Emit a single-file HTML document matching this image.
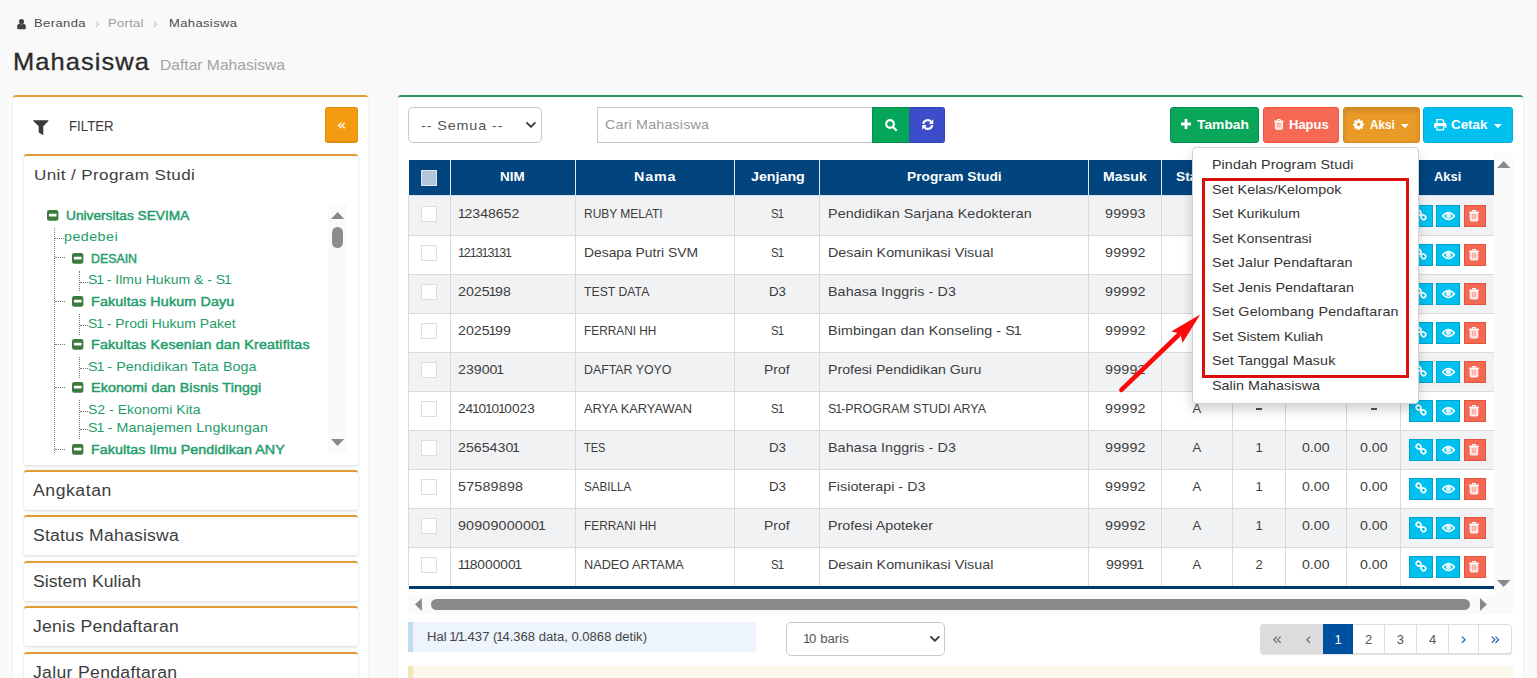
<!DOCTYPE html>
<html><head><meta charset="utf-8"><title>Mahasiswa</title>
<style>
html,body{margin:0;padding:0}
body{width:1537px;height:678px;overflow:hidden;background:#f9f9f9;position:relative;font-family:"Liberation Sans", sans-serif;}
.a{position:absolute;box-sizing:border-box}
.t{position:absolute;white-space:pre;line-height:1;font-family:"Liberation Sans", sans-serif;transform-origin:0 50%}
svg{position:absolute;overflow:visible}
.t i,.m i{font-style:normal;margin:0 -0.085em}
</style></head>
<body>
<svg style="left:17.4px;top:18.6px;" width="9" height="10.3" viewBox="0 0 9 10.3"><circle cx="4.5" cy="2.6" r="2.55" fill="#444"/><path d="M0.2 9.2 L0.2 7.4 Q0.2 4.8 2.7 4.7 Q4.5 6 6.3 4.7 Q8.8 4.8 8.8 7.4 L8.8 9.2 Q8.8 10.3 7.6 10.3 H1.4 Q0.2 10.3 0.2 9.2 Z" fill="#444"/></svg>
<span class="t" style="left:34.20px;top:17.91px;font-size:11.8px;color:#4a4a4a;font-weight:400;letter-spacing:0.368px;transform:scaleX(1.1000);">Beranda</span>
<svg style="left:95px;top:20.6px;" width="4.4" height="6.4" viewBox="0 0 5 8"><path transform="translate(5,0) scale(-1,1)" d="M4.2 0.6 L0.8 4 L4.2 7.4" fill="none" stroke="#c2c2c8" stroke-width="1.4"/></svg>
<span class="t" style="left:108.00px;top:17.91px;font-size:11.8px;color:#9c9c9c;font-weight:400;letter-spacing:0.289px;transform:scaleX(1.1000);">Portal</span>
<svg style="left:153px;top:20.6px;" width="4.4" height="6.4" viewBox="0 0 5 8"><path transform="translate(5,0) scale(-1,1)" d="M4.2 0.6 L0.8 4 L4.2 7.4" fill="none" stroke="#c2c2c8" stroke-width="1.4"/></svg>
<span class="t" style="left:169.00px;top:17.91px;font-size:11.8px;color:#4a4a4a;font-weight:400;letter-spacing:0.350px;transform:scaleX(1.1000);">Mahasiswa</span>
<span class="t" style="left:13.00px;top:50.96px;font-size:23.2px;color:#2b2b2b;font-weight:400;letter-spacing:0.956px;transform:scaleX(1.1000);-webkit-text-stroke:0.3px #2b2b2b;">Mahasiswa</span>
<span class="t" style="left:160.00px;top:57.30px;font-size:15px;color:#a3a3a3;font-weight:400;transform:scaleX(1.0413);">Daftar Mahasiswa</span>
<div class="a" style="left:13px;top:95px;width:355px;height:600px;background:#fff;border-top:2px solid #de9d35;border-radius:3px;box-shadow:0 1px 2px rgba(0,0,0,.12);"></div>
<svg style="left:32.5px;top:119.7px;" width="16" height="16" viewBox="0 0 16 16"><path d="M0.4 0.3 H15.2 Q15.9 0.5 15.4 1.1 L10.3 6.3 V15.3 L5.7 12.6 V6.3 L0.3 1.1 Q-0.2 0.5 0.4 0.3 Z" fill="#3a3a3a"/></svg>
<span class="t" style="left:68.50px;top:117.88px;font-size:15.5px;color:#3a3a3a;font-weight:400;transform:scaleX(0.8555);">FILTER</span>
<div class="a" style="left:325px;top:107px;width:33px;height:36px;background:#f39c12;border-radius:3px;border:1px solid #e08e0b;border-bottom-width:2px;"></div>
<svg style="left:337.9px;top:121.8px;" width="7.4" height="6.9" viewBox="0 0 9 8"><path  d="M4.2 0.6 L0.8 4 L4.2 7.4 M8.2 0.6 L4.8 4 L8.2 7.4" fill="none" stroke="#fff" stroke-width="1.5"/></svg>
<div class="a" style="left:23.5px;top:154px;width:334px;height:310.5px;background:#fff;border-top:2px solid #de9d35;border-radius:3px;box-shadow:0 1px 3px rgba(0,0,0,.16);"></div>
<span class="t" style="left:33.50px;top:167.08px;font-size:15.5px;color:#3d3d3d;font-weight:400;letter-spacing:0.348px;transform:scaleX(1.1000);">Unit / Program Studi</span>
<div class="a" style="left:328px;top:204px;width:19px;height:249px;background:#fafafa;"></div>
<svg style="left:330.9px;top:211.8px;" width="13.2" height="7.1" viewBox="0 0 13.2 7.1"><path d="M0 7.1 L6.6 0 L13.2 7.1 Z" fill="#8a8a8a"/></svg>
<div class="a" style="left:332px;top:227px;width:11px;height:21px;background:#8c8c8c;border-radius:5.5px;"></div>
<svg style="left:330.9px;top:438.6px;" width="13.2" height="7.1" viewBox="0 0 13.2 7.1"><path d="M0 0 L6.6 7.1 L13.2 0 Z" fill="#8a8a8a"/></svg>
<div class="a" style="left:54px;top:228px;width:0;height:225px;border-left:1px dotted #777"></div>
<div class="a" style="left:79px;top:270.5px;width:0;height:20.5px;border-left:1px dotted #777"></div>
<div class="a" style="left:79px;top:314px;width:0;height:20.5px;border-left:1px dotted #777"></div>
<div class="a" style="left:79px;top:357px;width:0;height:20.5px;border-left:1px dotted #777"></div>
<div class="a" style="left:79px;top:400px;width:0;height:39px;border-left:1px dotted #777"></div>
<div class="a" style="left:54.5px;top:238px;width:9.5px;height:0;border-top:1px dotted #777"></div>
<div class="a" style="left:54.5px;top:257px;width:10.0px;height:0;border-top:1px dotted #777"></div>
<div class="a" style="left:54.5px;top:300.5px;width:10.0px;height:0;border-top:1px dotted #777"></div>
<div class="a" style="left:54.5px;top:343.5px;width:10.0px;height:0;border-top:1px dotted #777"></div>
<div class="a" style="left:54.5px;top:386.5px;width:10.0px;height:0;border-top:1px dotted #777"></div>
<div class="a" style="left:54.5px;top:448.5px;width:10.0px;height:0;border-top:1px dotted #777"></div>
<div class="a" style="left:79.5px;top:281.5px;width:8.5px;height:0;border-top:1px dotted #777"></div>
<div class="a" style="left:79.5px;top:325px;width:8.5px;height:0;border-top:1px dotted #777"></div>
<div class="a" style="left:79.5px;top:368px;width:8.5px;height:0;border-top:1px dotted #777"></div>
<div class="a" style="left:79.5px;top:411px;width:8.5px;height:0;border-top:1px dotted #777"></div>
<div class="a" style="left:79.5px;top:429px;width:8.5px;height:0;border-top:1px dotted #777"></div>
<svg style="left:46.6px;top:210px;" width="11.4" height="10.7" viewBox="0 0 11.4 10.7"><rect x="0" y="0" width="11.4" height="10.7" rx="2.3" fill="#3d7a3d"/><rect x="2" y="3.8" width="7.5" height="2.6" rx="0.5" fill="#fff"/></svg>
<span class="t" style="left:65.90px;top:209.00px;font-size:13px;color:#1f9d6b;font-weight:400;transform:scaleX(1.0534);-webkit-text-stroke:0.45px #1f9d6b;">Universitas SEVIMA</span>
<span class="t" style="left:63.90px;top:229.70px;font-size:13px;color:#1f9d6b;font-weight:400;letter-spacing:0.408px;transform:scaleX(1.1000);">pedebei</span>
<svg style="left:71.6px;top:253.2px;" width="11.4" height="10.7" viewBox="0 0 11.4 10.7"><rect x="0" y="0" width="11.4" height="10.7" rx="2.3" fill="#3d7a3d"/><rect x="2" y="3.8" width="7.5" height="2.6" rx="0.5" fill="#fff"/></svg>
<span class="t" style="left:90.70px;top:252.00px;font-size:13px;color:#1f9d6b;font-weight:400;transform:scaleX(0.9503);-webkit-text-stroke:0.45px #1f9d6b;">DESAIN</span>
<svg style="left:71.6px;top:296.09999999999997px;" width="11.4" height="10.7" viewBox="0 0 11.4 10.7"><rect x="0" y="0" width="11.4" height="10.7" rx="2.3" fill="#3d7a3d"/><rect x="2" y="3.8" width="7.5" height="2.6" rx="0.5" fill="#fff"/></svg>
<span class="t" style="left:90.70px;top:294.90px;font-size:13px;color:#1f9d6b;font-weight:400;letter-spacing:0.132px;transform:scaleX(1.1000);-webkit-text-stroke:0.45px #1f9d6b;">Fakultas Hukum Dayu</span>
<svg style="left:71.6px;top:339.2px;" width="11.4" height="10.7" viewBox="0 0 11.4 10.7"><rect x="0" y="0" width="11.4" height="10.7" rx="2.3" fill="#3d7a3d"/><rect x="2" y="3.8" width="7.5" height="2.6" rx="0.5" fill="#fff"/></svg>
<span class="t" style="left:90.70px;top:338.00px;font-size:13px;color:#1f9d6b;font-weight:400;letter-spacing:0.158px;transform:scaleX(1.1000);-webkit-text-stroke:0.45px #1f9d6b;">Fakultas Kesenian dan Kreatifitas</span>
<svg style="left:71.6px;top:381.7px;" width="11.4" height="10.7" viewBox="0 0 11.4 10.7"><rect x="0" y="0" width="11.4" height="10.7" rx="2.3" fill="#3d7a3d"/><rect x="2" y="3.8" width="7.5" height="2.6" rx="0.5" fill="#fff"/></svg>
<span class="t" style="left:90.70px;top:380.50px;font-size:13px;color:#1f9d6b;font-weight:400;letter-spacing:0.097px;transform:scaleX(1.1000);-webkit-text-stroke:0.45px #1f9d6b;">Ekonomi dan Bisnis Tinggi</span>
<svg style="left:71.6px;top:444.09999999999997px;" width="11.4" height="10.7" viewBox="0 0 11.4 10.7"><rect x="0" y="0" width="11.4" height="10.7" rx="2.3" fill="#3d7a3d"/><rect x="2" y="3.8" width="7.5" height="2.6" rx="0.5" fill="#fff"/></svg>
<span class="t" style="left:90.70px;top:442.90px;font-size:13px;color:#1f9d6b;font-weight:400;letter-spacing:0.048px;transform:scaleX(1.1000);-webkit-text-stroke:0.45px #1f9d6b;">Fakultas Ilmu Pendidikan ANY</span>
<span class="t" style="left:88.20px;top:273.00px;font-size:13px;color:#1f9d6b;font-weight:400;transform:scaleX(1.0795);">S<i>1</i> - Ilmu Hukum &amp; - S<i>1</i></span>
<span class="t" style="left:88.20px;top:317.00px;font-size:13px;color:#1f9d6b;font-weight:400;transform:scaleX(1.0753);">S<i>1</i> - Prodi Hukum Paket</span>
<span class="t" style="left:88.20px;top:359.70px;font-size:13px;color:#1f9d6b;font-weight:400;letter-spacing:0.069px;transform:scaleX(1.1000);">S<i>1</i> - Pendidikan Tata Boga</span>
<span class="t" style="left:88.20px;top:402.80px;font-size:13px;color:#1f9d6b;font-weight:400;transform:scaleX(1.0812);">S2 - Ekonomi Kita</span>
<span class="t" style="left:88.20px;top:420.80px;font-size:13px;color:#1f9d6b;font-weight:400;letter-spacing:0.108px;transform:scaleX(1.1000);">S<i>1</i> - Manajemen Lngkungan</span>
<div class="a" style="left:24px;top:455.5px;width:333px;height:8px;background:#fff;"></div>
<div class="a" style="left:23.5px;top:469.6px;width:334px;height:40px;background:#fff;border-top:2px solid #de9d35;border-radius:3px;box-shadow:0 1px 3px rgba(0,0,0,.16);"></div>
<span class="t" style="left:33.20px;top:482.56px;font-size:16px;color:#3d3d3d;font-weight:400;letter-spacing:0.510px;transform:scaleX(1.1000);">Angkatan</span>
<div class="a" style="left:23.5px;top:515.2px;width:334px;height:40px;background:#fff;border-top:2px solid #de9d35;border-radius:3px;box-shadow:0 1px 3px rgba(0,0,0,.16);"></div>
<span class="t" style="left:33.20px;top:528.16px;font-size:16px;color:#3d3d3d;font-weight:400;letter-spacing:0.174px;transform:scaleX(1.1000);">Status Mahasiswa</span>
<div class="a" style="left:23.5px;top:560.8px;width:334px;height:40px;background:#fff;border-top:2px solid #de9d35;border-radius:3px;box-shadow:0 1px 3px rgba(0,0,0,.16);"></div>
<span class="t" style="left:33.20px;top:573.76px;font-size:16px;color:#3d3d3d;font-weight:400;letter-spacing:0.029px;transform:scaleX(1.1000);">Sistem Kuliah</span>
<div class="a" style="left:23.5px;top:606.4px;width:334px;height:40px;background:#fff;border-top:2px solid #de9d35;border-radius:3px;box-shadow:0 1px 3px rgba(0,0,0,.16);"></div>
<span class="t" style="left:33.20px;top:619.36px;font-size:16px;color:#3d3d3d;font-weight:400;letter-spacing:0.217px;transform:scaleX(1.1000);">Jenis Pendaftaran</span>
<div class="a" style="left:23.5px;top:652px;width:334px;height:40px;background:#fff;border-top:2px solid #de9d35;border-radius:3px;box-shadow:0 1px 3px rgba(0,0,0,.16);"></div>
<span class="t" style="left:33.20px;top:664.96px;font-size:16px;color:#3d3d3d;font-weight:400;letter-spacing:0.293px;transform:scaleX(1.1000);">Jalur Pendaftaran</span>
<div class="a" style="left:398px;top:95px;width:1125px;height:600px;background:#fff;border-top:2px solid #2a9762;border-radius:3px;box-shadow:0 1px 2px rgba(0,0,0,.12);"></div>
<div class="a" style="left:408px;top:107px;width:134px;height:36px;background:#fff;border:1px solid #c9c9c9;border-radius:5px;"></div>
<span class="t" style="left:420.50px;top:119.00px;font-size:13px;color:#555;font-weight:400;letter-spacing:0.827px;transform:scaleX(1.1000);">-- Semua --</span>
<svg style="left:526.4px;top:122.2px;" width="9.8" height="6.1" viewBox="0 0 10.5 6.5"><path d="M1 1 L5.25 5.2 L9.5 1" fill="none" stroke="#3a3a3a" stroke-width="2" stroke-linecap="round" stroke-linejoin="round"/></svg>
<div class="a" style="left:597px;top:107px;width:276px;height:36px;background:#fff;border:1px solid #c9c9c9;"></div>
<span class="t" style="left:605.30px;top:118.30px;font-size:13px;color:#999;font-weight:400;letter-spacing:0.159px;transform:scaleX(1.1000);">Cari Mahasiswa</span>
<div class="a" style="left:872px;top:107px;width:37px;height:36px;background:#04a65a;border:1px solid #029150;border-right:none;"></div>
<div class="a" style="left:909px;top:107px;width:36px;height:36px;background:#3b4dc9;border-radius:0 3px 3px 0;border:1px solid #3443b8;border-left:1px solid #2f5d9a;"></div>
<svg style="left:883.6px;top:118.2px;" width="14" height="14" viewBox="0 0 14 14"><circle cx="6" cy="6" r="3.85" fill="none" stroke="#fff" stroke-width="2.1"/><path d="M9 9 L12 12" stroke="#fff" stroke-width="2.3" stroke-linecap="round"/></svg>
<svg style="left:921.55px;top:119.2px;" width="11.5" height="11" viewBox="0 0 11.5 11"><path d="M1.3 4.9 A4.4 4.4 0 0 1 9.2 2.9" fill="none" stroke="#fff" stroke-width="2.2"/><path d="M10.2 6.1 A4.4 4.4 0 0 1 2.3 8.1" fill="none" stroke="#fff" stroke-width="2.2"/><path d="M11.3 0.3 V4.9 H6.7 Z" fill="#fff"/><path d="M0.2 10.7 V6.1 H4.8 Z" fill="#fff"/></svg>
<div class="a" style="left:1170px;top:107px;width:89px;height:36px;background:#0aa65a;border-radius:3px;border:1px solid #088f4e;"></div>
<svg style="left:1181px;top:119.4px;" width="10" height="10" viewBox="0 0 10 10"><path d="M3.6 0 H6.4 V3.6 H10 V6.4 H6.4 V10 H3.6 V6.4 H0 V3.6 H3.6 Z" fill="#fff"/></svg>
<span class="t" style="left:1196.80px;top:118.30px;font-size:13px;color:#fff;font-weight:700;transform:scaleX(1.0636);">Tambah</span>
<div class="a" style="left:1263px;top:107px;width:76px;height:36px;background:#f56954;border-radius:3px;border:1px solid #f4543c;"></div>
<svg style="left:1273.5px;top:119.2px;" width="9.8" height="10.8" viewBox="0 0 10 11.5"><path d="M0 2.3 H10" stroke="#fff" stroke-width="1.3"/><path d="M3.1 2 L3.7 0.6 H6.3 L6.9 2" fill="none" stroke="#fff" stroke-width="1.1"/><path d="M1.2 2.6 V9.9 Q1.2 11 2.3 11 H7.7 Q8.8 11 8.8 9.9 V2.6 Z" fill="#fff" fill-opacity="0.78" stroke="#fff" stroke-width="0.9"/><path d="M3.9 4.1 V9.1 M6.1 4.1 V9.1" stroke="#f56954" stroke-width="0.9" stroke-opacity="0.75"/></svg>
<span class="t" style="left:1289.00px;top:118.30px;font-size:13px;color:#fff;font-weight:700;">Hapus</span>
<div class="a" style="left:1343px;top:107px;width:77px;height:36px;background:#ea9a27;border-radius:3px;border:1px solid #d98c1a;box-shadow:inset 0 3px 5px rgba(0,0,0,.125);"></div>
<svg style="left:1353.1px;top:118.9px;" width="11.2" height="11.2" viewBox="0 0 11.2 11.2"><path d="M11.12 4.65 L11.12 6.55 L9.79 6.76 L9.38 7.74 L10.17 8.83 L8.83 10.17 L7.74 9.38 L6.76 9.79 L6.55 11.12 L4.65 11.12 L4.44 9.79 L3.46 9.38 L2.37 10.17 L1.03 8.83 L1.82 7.74 L1.41 6.76 L0.08 6.55 L0.08 4.65 L1.41 4.44 L1.82 3.46 L1.03 2.37 L2.37 1.03 L3.46 1.82 L4.44 1.41 L4.65 0.08 L6.55 0.08 L6.76 1.41 L7.74 1.82 L8.83 1.03 L10.17 2.37 L9.38 3.46 L9.79 4.44 Z M7.35 5.6 A1.75 1.75 0 1 0 3.85 5.6 A1.75 1.75 0 1 0 7.35 5.6 Z" fill="#fff" fill-rule="evenodd"/></svg>
<span class="t" style="left:1369.90px;top:118.30px;font-size:13px;color:#fff;font-weight:700;transform:scaleX(0.9028);">Aksi</span>
<svg style="left:1401.3px;top:123.8px;" width="7.8" height="4.3" viewBox="0 0 7.8 4.3"><path d="M0 0 H7.8 L3.9 4.3 Z" fill="#fff"/></svg>
<div class="a" style="left:1423px;top:107px;width:90px;height:36px;background:#00c0ef;border-radius:3px;border:1px solid #00acd6;"></div>
<svg style="left:1434px;top:118.8px;" width="12.5" height="11.5" viewBox="0 0 12.5 11.5"><path d="M2.9 4.2 V0.6 H8.2 L9.6 2 V4.2" fill="none" stroke="#fff" stroke-width="1.2"/><path d="M1.4 4 H11.1 Q12.5 4 12.5 5.4 V8.8 H10.4 V7 H2.1 V8.8 H0 V5.4 Q0 4 1.4 4 Z" fill="#fff"/><path d="M2.9 7.4 V10.9 H9.6 V7.4" fill="none" stroke="#fff" stroke-width="1.2"/></svg>
<span class="t" style="left:1451.40px;top:118.30px;font-size:13px;color:#fff;font-weight:700;transform:scaleX(1.0304);">Cetak</span>
<svg style="left:1494.3px;top:123.8px;" width="7.8" height="4.3" viewBox="0 0 7.8 4.3"><path d="M0 0 H7.8 L3.9 4.3 Z" fill="#fff"/></svg>
<div class="a" style="left:408.5px;top:160px;width:1085.5px;height:35px;background:#01447e;"></div>
<div class="a" style="left:450.0px;top:160px;width:1px;height:35px;background:#dfe6ee;"></div>
<div class="a" style="left:575.0px;top:160px;width:1px;height:35px;background:#dfe6ee;"></div>
<div class="a" style="left:734.0px;top:160px;width:1px;height:35px;background:#dfe6ee;"></div>
<div class="a" style="left:819.0px;top:160px;width:1px;height:35px;background:#dfe6ee;"></div>
<div class="a" style="left:1088.0px;top:160px;width:1px;height:35px;background:#dfe6ee;"></div>
<div class="a" style="left:1161.0px;top:160px;width:1px;height:35px;background:#dfe6ee;"></div>
<div class="a" style="left:1232.0px;top:160px;width:1px;height:35px;background:#dfe6ee;"></div>
<div class="a" style="left:1285.0px;top:160px;width:1px;height:35px;background:#dfe6ee;"></div>
<div class="a" style="left:1346.0px;top:160px;width:1px;height:35px;background:#dfe6ee;"></div>
<div class="a" style="left:1400.0px;top:160px;width:1px;height:35px;background:#dfe6ee;"></div>
<div class="a" style="left:421px;top:170px;width:16px;height:16px;background:#b3c6db;border:1px solid #dfe8f1;"></div>
<span class="t" style="left:500.30px;top:170.20px;font-size:13px;color:#fff;font-weight:700;transform:scaleX(1.0317);">NIM</span>
<span class="t" style="left:634.20px;top:170.20px;font-size:13px;color:#fff;font-weight:700;letter-spacing:0.738px;transform:scaleX(1.1000);">Nama</span>
<span class="t" style="left:750.50px;top:170.20px;font-size:13px;color:#fff;font-weight:700;transform:scaleX(1.0952);">Jenjang</span>
<span class="t" style="left:906.95px;top:170.20px;font-size:13px;color:#fff;font-weight:700;transform:scaleX(1.0572);">Program Studi</span>
<span class="t" style="left:1102.95px;top:170.20px;font-size:13px;color:#fff;font-weight:700;transform:scaleX(1.0798);">Masuk</span>
<span class="t" style="left:1175.80px;top:170.20px;font-size:13px;color:#fff;font-weight:700;transform:scaleX(1.0671);">Status</span>
<span class="t" style="left:1433.65px;top:170.20px;font-size:13px;color:#fff;font-weight:700;transform:scaleX(0.9939);">Aksi</span>
<div class="a" style="left:408.5px;top:195px;width:1085.5px;height:1px;background:#d6e0ec;"></div>
<div class="a" style="left:408.5px;top:196px;width:1085.5px;height:39px;background:#f1f2f4;"></div>
<div class="a" style="left:408.5px;top:235px;width:1085.5px;height:39px;background:#fff;"></div>
<div class="a" style="left:408.5px;top:274px;width:1085.5px;height:39px;background:#f1f2f4;"></div>
<div class="a" style="left:408.5px;top:313px;width:1085.5px;height:39px;background:#fff;"></div>
<div class="a" style="left:408.5px;top:352px;width:1085.5px;height:39px;background:#f1f2f4;"></div>
<div class="a" style="left:408.5px;top:391px;width:1085.5px;height:39px;background:#fff;"></div>
<div class="a" style="left:408.5px;top:430px;width:1085.5px;height:39px;background:#f1f2f4;"></div>
<div class="a" style="left:408.5px;top:469px;width:1085.5px;height:39px;background:#fff;"></div>
<div class="a" style="left:408.5px;top:508px;width:1085.5px;height:39px;background:#f1f2f4;"></div>
<div class="a" style="left:408.5px;top:547px;width:1085.5px;height:39px;background:#fff;"></div>
<div class="a" style="left:408.5px;top:235px;width:1085.5px;height:1px;background:#dadada;"></div>
<div class="a" style="left:408.5px;top:274px;width:1085.5px;height:1px;background:#dadada;"></div>
<div class="a" style="left:408.5px;top:313px;width:1085.5px;height:1px;background:#dadada;"></div>
<div class="a" style="left:408.5px;top:352px;width:1085.5px;height:1px;background:#dadada;"></div>
<div class="a" style="left:408.5px;top:391px;width:1085.5px;height:1px;background:#dadada;"></div>
<div class="a" style="left:408.5px;top:430px;width:1085.5px;height:1px;background:#dadada;"></div>
<div class="a" style="left:408.5px;top:469px;width:1085.5px;height:1px;background:#dadada;"></div>
<div class="a" style="left:408.5px;top:508px;width:1085.5px;height:1px;background:#dadada;"></div>
<div class="a" style="left:408.5px;top:547px;width:1085.5px;height:1px;background:#dadada;"></div>
<div class="a" style="left:408.0px;top:196px;width:1px;height:390px;background:#dadada;"></div>
<div class="a" style="left:450.0px;top:196px;width:1px;height:390px;background:#dadada;"></div>
<div class="a" style="left:575.0px;top:196px;width:1px;height:390px;background:#dadada;"></div>
<div class="a" style="left:734.0px;top:196px;width:1px;height:390px;background:#dadada;"></div>
<div class="a" style="left:819.0px;top:196px;width:1px;height:390px;background:#dadada;"></div>
<div class="a" style="left:1088.0px;top:196px;width:1px;height:390px;background:#dadada;"></div>
<div class="a" style="left:1161.0px;top:196px;width:1px;height:390px;background:#dadada;"></div>
<div class="a" style="left:1232.0px;top:196px;width:1px;height:390px;background:#dadada;"></div>
<div class="a" style="left:1285.0px;top:196px;width:1px;height:390px;background:#dadada;"></div>
<div class="a" style="left:1346.0px;top:196px;width:1px;height:390px;background:#dadada;"></div>
<div class="a" style="left:1400.0px;top:196px;width:1px;height:390px;background:#dadada;"></div>
<div class="a" style="left:408.5px;top:586px;width:1085.5px;height:3px;background:#003b70;"></div>
<div class="a" style="left:421px;top:206px;width:16px;height:16px;background:#fff;border:1px solid #dedede;"></div>
<span class="t" style="left:459.30px;top:206.90px;font-size:13px;color:#3d3d3d;font-weight:400;transform:scaleX(1.0831);"><i>1</i>2348652</span>
<span class="t" style="left:583.70px;top:206.90px;font-size:13px;color:#3d3d3d;font-weight:400;transform:scaleX(0.9195);">RUBY MELATI</span>
<span class="t" style="left:771.00px;top:206.90px;font-size:13px;color:#3d3d3d;font-weight:400;transform:scaleX(0.8747);">S<i>1</i></span>
<span class="t" style="left:828.30px;top:206.90px;font-size:13px;color:#3d3d3d;font-weight:400;letter-spacing:0.083px;transform:scaleX(1.1000);">Pendidikan Sarjana Kedokteran</span>
<span class="t" style="left:1104.55px;top:206.90px;font-size:13px;color:#3d3d3d;font-weight:400;letter-spacing:0.165px;transform:scaleX(1.1000);">99993</span>
<div class="a" style="left:1409px;top:205px;width:24px;height:22px;background:#00c0ef;border:1px solid #00a3cc;"></div>
<svg style="left:1415.3px;top:209.3px;" width="12" height="12" viewBox="0 0 12 12"><g fill="none" stroke="#fff" stroke-width="1.65"><rect x="-2.4" y="-2.05" width="4.8" height="4.1" rx="1.9" transform="translate(3.6 3.7) rotate(45)"/><rect x="-2.4" y="-2.05" width="4.8" height="4.1" rx="1.9" transform="translate(8.4 8.3) rotate(45)"/><path d="M5.1 5.2 L6.9 6.8" stroke-width="1.7"/></g></svg>
<div class="a" style="left:1436px;top:205px;width:24px;height:22px;background:#00c0ef;border:1px solid #00a3cc;"></div>
<svg style="left:1441.7px;top:212px;" width="13" height="8" viewBox="0 0 13 8"><path d="M0.6 4 Q6.5 -2.9 12.4 4 Q6.5 10.9 0.6 4 Z" fill="none" stroke="#fff" stroke-width="1.45"/><circle cx="6.5" cy="3.6" r="2.6" fill="#fff" fill-opacity="0.85"/></svg>
<div class="a" style="left:1464px;top:205px;width:22px;height:22px;background:#f56954;border:1px solid #e2553f;"></div>
<svg style="left:1469.3px;top:209.9px;" width="10" height="11.5" viewBox="0 0 10 11.5"><path d="M0 2.3 H10" stroke="#fff" stroke-width="1.3"/><path d="M3.1 2 L3.7 0.6 H6.3 L6.9 2" fill="none" stroke="#fff" stroke-width="1.1"/><path d="M1.2 2.6 V9.9 Q1.2 11 2.3 11 H7.7 Q8.8 11 8.8 9.9 V2.6 Z" fill="#fff" fill-opacity="0.78" stroke="#fff" stroke-width="0.9"/><path d="M3.9 4.1 V9.1 M6.1 4.1 V9.1" stroke="#f56954" stroke-width="0.9" stroke-opacity="0.75"/></svg>
<div class="a" style="left:421px;top:245px;width:16px;height:16px;background:#fff;border:1px solid #dedede;"></div>
<span class="t" style="left:459.16px;top:245.93px;font-size:13px;color:#3d3d3d;font-weight:400;transform:scaleX(0.9599);"><i>1</i>2<i>1</i>3<i>1</i>3<i>1</i>3<i>1</i></span>
<span class="t" style="left:583.70px;top:245.93px;font-size:13px;color:#3d3d3d;font-weight:400;transform:scaleX(1.0660);">Desapa Putri SVM</span>
<span class="t" style="left:771.00px;top:245.93px;font-size:13px;color:#3d3d3d;font-weight:400;transform:scaleX(0.8747);">S<i>1</i></span>
<span class="t" style="left:828.30px;top:245.93px;font-size:13px;color:#3d3d3d;font-weight:400;letter-spacing:0.013px;transform:scaleX(1.1000);">Desain Komunikasi Visual</span>
<span class="t" style="left:1104.55px;top:245.93px;font-size:13px;color:#3d3d3d;font-weight:400;letter-spacing:0.165px;transform:scaleX(1.1000);">99992</span>
<div class="a" style="left:1409px;top:244px;width:24px;height:22px;background:#00c0ef;border:1px solid #00a3cc;"></div>
<svg style="left:1415.3px;top:248.3px;" width="12" height="12" viewBox="0 0 12 12"><g fill="none" stroke="#fff" stroke-width="1.65"><rect x="-2.4" y="-2.05" width="4.8" height="4.1" rx="1.9" transform="translate(3.6 3.7) rotate(45)"/><rect x="-2.4" y="-2.05" width="4.8" height="4.1" rx="1.9" transform="translate(8.4 8.3) rotate(45)"/><path d="M5.1 5.2 L6.9 6.8" stroke-width="1.7"/></g></svg>
<div class="a" style="left:1436px;top:244px;width:24px;height:22px;background:#00c0ef;border:1px solid #00a3cc;"></div>
<svg style="left:1441.7px;top:251px;" width="13" height="8" viewBox="0 0 13 8"><path d="M0.6 4 Q6.5 -2.9 12.4 4 Q6.5 10.9 0.6 4 Z" fill="none" stroke="#fff" stroke-width="1.45"/><circle cx="6.5" cy="3.6" r="2.6" fill="#fff" fill-opacity="0.85"/></svg>
<div class="a" style="left:1464px;top:244px;width:22px;height:22px;background:#f56954;border:1px solid #e2553f;"></div>
<svg style="left:1469.3px;top:248.9px;" width="10" height="11.5" viewBox="0 0 10 11.5"><path d="M0 2.3 H10" stroke="#fff" stroke-width="1.3"/><path d="M3.1 2 L3.7 0.6 H6.3 L6.9 2" fill="none" stroke="#fff" stroke-width="1.1"/><path d="M1.2 2.6 V9.9 Q1.2 11 2.3 11 H7.7 Q8.8 11 8.8 9.9 V2.6 Z" fill="#fff" fill-opacity="0.78" stroke="#fff" stroke-width="0.9"/><path d="M3.9 4.1 V9.1 M6.1 4.1 V9.1" stroke="#f56954" stroke-width="0.9" stroke-opacity="0.75"/></svg>
<div class="a" style="left:421px;top:284px;width:16px;height:16px;background:#fff;border:1px solid #dedede;"></div>
<span class="t" style="left:458.10px;top:284.96px;font-size:13px;color:#3d3d3d;font-weight:400;transform:scaleX(1.0921);">2025<i>1</i>98</span>
<span class="t" style="left:583.70px;top:284.96px;font-size:13px;color:#3d3d3d;font-weight:400;transform:scaleX(0.9417);">TEST DATA</span>
<span class="t" style="left:768.50px;top:284.96px;font-size:13px;color:#3d3d3d;font-weight:400;transform:scaleX(1.0226);">D3</span>
<span class="t" style="left:828.30px;top:284.96px;font-size:13px;color:#3d3d3d;font-weight:400;letter-spacing:0.076px;transform:scaleX(1.1000);">Bahasa Inggris - D3</span>
<span class="t" style="left:1104.55px;top:284.96px;font-size:13px;color:#3d3d3d;font-weight:400;letter-spacing:0.165px;transform:scaleX(1.1000);">99992</span>
<div class="a" style="left:1409px;top:283px;width:24px;height:22px;background:#00c0ef;border:1px solid #00a3cc;"></div>
<svg style="left:1415.3px;top:287.3px;" width="12" height="12" viewBox="0 0 12 12"><g fill="none" stroke="#fff" stroke-width="1.65"><rect x="-2.4" y="-2.05" width="4.8" height="4.1" rx="1.9" transform="translate(3.6 3.7) rotate(45)"/><rect x="-2.4" y="-2.05" width="4.8" height="4.1" rx="1.9" transform="translate(8.4 8.3) rotate(45)"/><path d="M5.1 5.2 L6.9 6.8" stroke-width="1.7"/></g></svg>
<div class="a" style="left:1436px;top:283px;width:24px;height:22px;background:#00c0ef;border:1px solid #00a3cc;"></div>
<svg style="left:1441.7px;top:290px;" width="13" height="8" viewBox="0 0 13 8"><path d="M0.6 4 Q6.5 -2.9 12.4 4 Q6.5 10.9 0.6 4 Z" fill="none" stroke="#fff" stroke-width="1.45"/><circle cx="6.5" cy="3.6" r="2.6" fill="#fff" fill-opacity="0.85"/></svg>
<div class="a" style="left:1464px;top:283px;width:22px;height:22px;background:#f56954;border:1px solid #e2553f;"></div>
<svg style="left:1469.3px;top:287.9px;" width="10" height="11.5" viewBox="0 0 10 11.5"><path d="M0 2.3 H10" stroke="#fff" stroke-width="1.3"/><path d="M3.1 2 L3.7 0.6 H6.3 L6.9 2" fill="none" stroke="#fff" stroke-width="1.1"/><path d="M1.2 2.6 V9.9 Q1.2 11 2.3 11 H7.7 Q8.8 11 8.8 9.9 V2.6 Z" fill="#fff" fill-opacity="0.78" stroke="#fff" stroke-width="0.9"/><path d="M3.9 4.1 V9.1 M6.1 4.1 V9.1" stroke="#f56954" stroke-width="0.9" stroke-opacity="0.75"/></svg>
<div class="a" style="left:421px;top:323px;width:16px;height:16px;background:#fff;border:1px solid #dedede;"></div>
<span class="t" style="left:458.10px;top:323.99px;font-size:13px;color:#3d3d3d;font-weight:400;transform:scaleX(1.0921);">2025<i>1</i>99</span>
<span class="t" style="left:583.70px;top:323.99px;font-size:13px;color:#3d3d3d;font-weight:400;transform:scaleX(0.9112);">FERRANI HH</span>
<span class="t" style="left:771.00px;top:323.99px;font-size:13px;color:#3d3d3d;font-weight:400;transform:scaleX(0.8747);">S<i>1</i></span>
<span class="t" style="left:828.30px;top:323.99px;font-size:13px;color:#3d3d3d;font-weight:400;letter-spacing:0.084px;transform:scaleX(1.1000);">Bimbingan dan Konseling - S<i>1</i></span>
<span class="t" style="left:1104.55px;top:323.99px;font-size:13px;color:#3d3d3d;font-weight:400;letter-spacing:0.165px;transform:scaleX(1.1000);">99992</span>
<div class="a" style="left:1409px;top:322px;width:24px;height:22px;background:#00c0ef;border:1px solid #00a3cc;"></div>
<svg style="left:1415.3px;top:326.3px;" width="12" height="12" viewBox="0 0 12 12"><g fill="none" stroke="#fff" stroke-width="1.65"><rect x="-2.4" y="-2.05" width="4.8" height="4.1" rx="1.9" transform="translate(3.6 3.7) rotate(45)"/><rect x="-2.4" y="-2.05" width="4.8" height="4.1" rx="1.9" transform="translate(8.4 8.3) rotate(45)"/><path d="M5.1 5.2 L6.9 6.8" stroke-width="1.7"/></g></svg>
<div class="a" style="left:1436px;top:322px;width:24px;height:22px;background:#00c0ef;border:1px solid #00a3cc;"></div>
<svg style="left:1441.7px;top:329px;" width="13" height="8" viewBox="0 0 13 8"><path d="M0.6 4 Q6.5 -2.9 12.4 4 Q6.5 10.9 0.6 4 Z" fill="none" stroke="#fff" stroke-width="1.45"/><circle cx="6.5" cy="3.6" r="2.6" fill="#fff" fill-opacity="0.85"/></svg>
<div class="a" style="left:1464px;top:322px;width:22px;height:22px;background:#f56954;border:1px solid #e2553f;"></div>
<svg style="left:1469.3px;top:326.9px;" width="10" height="11.5" viewBox="0 0 10 11.5"><path d="M0 2.3 H10" stroke="#fff" stroke-width="1.3"/><path d="M3.1 2 L3.7 0.6 H6.3 L6.9 2" fill="none" stroke="#fff" stroke-width="1.1"/><path d="M1.2 2.6 V9.9 Q1.2 11 2.3 11 H7.7 Q8.8 11 8.8 9.9 V2.6 Z" fill="#fff" fill-opacity="0.78" stroke="#fff" stroke-width="0.9"/><path d="M3.9 4.1 V9.1 M6.1 4.1 V9.1" stroke="#f56954" stroke-width="0.9" stroke-opacity="0.75"/></svg>
<div class="a" style="left:421px;top:362px;width:16px;height:16px;background:#fff;border:1px solid #dedede;"></div>
<span class="t" style="left:458.10px;top:363.02px;font-size:13px;color:#3d3d3d;font-weight:400;transform:scaleX(1.0897);">23900<i>1</i></span>
<span class="t" style="left:583.70px;top:363.02px;font-size:13px;color:#3d3d3d;font-weight:400;transform:scaleX(0.9502);">DAFTAR YOYO</span>
<span class="t" style="left:764.25px;top:363.02px;font-size:13px;color:#3d3d3d;font-weight:400;transform:scaleX(1.0695);">Prof</span>
<span class="t" style="left:828.30px;top:363.02px;font-size:13px;color:#3d3d3d;font-weight:400;transform:scaleX(1.0878);">Profesi Pendidikan Guru</span>
<span class="t" style="left:1104.55px;top:363.02px;font-size:13px;color:#3d3d3d;font-weight:400;letter-spacing:0.165px;transform:scaleX(1.1000);">99992</span>
<div class="a" style="left:1409px;top:361px;width:24px;height:22px;background:#00c0ef;border:1px solid #00a3cc;"></div>
<svg style="left:1415.3px;top:365.3px;" width="12" height="12" viewBox="0 0 12 12"><g fill="none" stroke="#fff" stroke-width="1.65"><rect x="-2.4" y="-2.05" width="4.8" height="4.1" rx="1.9" transform="translate(3.6 3.7) rotate(45)"/><rect x="-2.4" y="-2.05" width="4.8" height="4.1" rx="1.9" transform="translate(8.4 8.3) rotate(45)"/><path d="M5.1 5.2 L6.9 6.8" stroke-width="1.7"/></g></svg>
<div class="a" style="left:1436px;top:361px;width:24px;height:22px;background:#00c0ef;border:1px solid #00a3cc;"></div>
<svg style="left:1441.7px;top:368px;" width="13" height="8" viewBox="0 0 13 8"><path d="M0.6 4 Q6.5 -2.9 12.4 4 Q6.5 10.9 0.6 4 Z" fill="none" stroke="#fff" stroke-width="1.45"/><circle cx="6.5" cy="3.6" r="2.6" fill="#fff" fill-opacity="0.85"/></svg>
<div class="a" style="left:1464px;top:361px;width:22px;height:22px;background:#f56954;border:1px solid #e2553f;"></div>
<svg style="left:1469.3px;top:365.9px;" width="10" height="11.5" viewBox="0 0 10 11.5"><path d="M0 2.3 H10" stroke="#fff" stroke-width="1.3"/><path d="M3.1 2 L3.7 0.6 H6.3 L6.9 2" fill="none" stroke="#fff" stroke-width="1.1"/><path d="M1.2 2.6 V9.9 Q1.2 11 2.3 11 H7.7 Q8.8 11 8.8 9.9 V2.6 Z" fill="#fff" fill-opacity="0.78" stroke="#fff" stroke-width="0.9"/><path d="M3.9 4.1 V9.1 M6.1 4.1 V9.1" stroke="#f56954" stroke-width="0.9" stroke-opacity="0.75"/></svg>
<div class="a" style="left:421px;top:401px;width:16px;height:16px;background:#fff;border:1px solid #dedede;"></div>
<span class="t" style="left:458.10px;top:402.05px;font-size:13px;color:#3d3d3d;font-weight:400;transform:scaleX(1.0521);">24<i>1</i>0<i>1</i>0<i>1</i>0023</span>
<span class="t" style="left:583.70px;top:402.05px;font-size:13px;color:#3d3d3d;font-weight:400;transform:scaleX(0.9886);">ARYA KARYAWAN</span>
<span class="t" style="left:771.00px;top:402.05px;font-size:13px;color:#3d3d3d;font-weight:400;transform:scaleX(0.8747);">S<i>1</i></span>
<span class="t" style="left:828.30px;top:402.05px;font-size:13px;color:#3d3d3d;font-weight:400;transform:scaleX(0.9579);">S<i>1</i>-PROGRAM STUDI ARYA</span>
<span class="t" style="left:1104.55px;top:402.05px;font-size:13px;color:#3d3d3d;font-weight:400;letter-spacing:0.165px;transform:scaleX(1.1000);">99992</span>
<span class="t" style="left:1192.46px;top:402.05px;font-size:13px;color:#3d3d3d;font-weight:400;">A</span>
<div class="a" style="left:1256px;top:408.45px;width:6px;height:1.2px;background:#555;"></div>
<div class="a" style="left:1370.5px;top:408.45px;width:6px;height:1.2px;background:#555;"></div>
<div class="a" style="left:1409px;top:400px;width:24px;height:22px;background:#00c0ef;border:1px solid #00a3cc;"></div>
<svg style="left:1415.3px;top:404.3px;" width="12" height="12" viewBox="0 0 12 12"><g fill="none" stroke="#fff" stroke-width="1.65"><rect x="-2.4" y="-2.05" width="4.8" height="4.1" rx="1.9" transform="translate(3.6 3.7) rotate(45)"/><rect x="-2.4" y="-2.05" width="4.8" height="4.1" rx="1.9" transform="translate(8.4 8.3) rotate(45)"/><path d="M5.1 5.2 L6.9 6.8" stroke-width="1.7"/></g></svg>
<div class="a" style="left:1436px;top:400px;width:24px;height:22px;background:#00c0ef;border:1px solid #00a3cc;"></div>
<svg style="left:1441.7px;top:407px;" width="13" height="8" viewBox="0 0 13 8"><path d="M0.6 4 Q6.5 -2.9 12.4 4 Q6.5 10.9 0.6 4 Z" fill="none" stroke="#fff" stroke-width="1.45"/><circle cx="6.5" cy="3.6" r="2.6" fill="#fff" fill-opacity="0.85"/></svg>
<div class="a" style="left:1464px;top:400px;width:22px;height:22px;background:#f56954;border:1px solid #e2553f;"></div>
<svg style="left:1469.3px;top:404.9px;" width="10" height="11.5" viewBox="0 0 10 11.5"><path d="M0 2.3 H10" stroke="#fff" stroke-width="1.3"/><path d="M3.1 2 L3.7 0.6 H6.3 L6.9 2" fill="none" stroke="#fff" stroke-width="1.1"/><path d="M1.2 2.6 V9.9 Q1.2 11 2.3 11 H7.7 Q8.8 11 8.8 9.9 V2.6 Z" fill="#fff" fill-opacity="0.78" stroke="#fff" stroke-width="0.9"/><path d="M3.9 4.1 V9.1 M6.1 4.1 V9.1" stroke="#f56954" stroke-width="0.9" stroke-opacity="0.75"/></svg>
<div class="a" style="left:421px;top:440px;width:16px;height:16px;background:#fff;border:1px solid #dedede;"></div>
<span class="t" style="left:458.10px;top:441.08px;font-size:13px;color:#3d3d3d;font-weight:400;transform:scaleX(1.0921);">2565430<i>1</i></span>
<span class="t" style="left:583.70px;top:441.08px;font-size:13px;color:#3d3d3d;font-weight:400;transform:scaleX(0.8460);">TES</span>
<span class="t" style="left:768.50px;top:441.08px;font-size:13px;color:#3d3d3d;font-weight:400;transform:scaleX(1.0226);">D3</span>
<span class="t" style="left:828.30px;top:441.08px;font-size:13px;color:#3d3d3d;font-weight:400;letter-spacing:0.076px;transform:scaleX(1.1000);">Bahasa Inggris - D3</span>
<span class="t" style="left:1104.55px;top:441.08px;font-size:13px;color:#3d3d3d;font-weight:400;letter-spacing:0.165px;transform:scaleX(1.1000);">99992</span>
<span class="t" style="left:1192.46px;top:441.08px;font-size:13px;color:#3d3d3d;font-weight:400;">A</span>
<span class="t" style="left:1256.48px;top:441.08px;font-size:13px;color:#3d3d3d;font-weight:400;"><i>1</i></span>
<span class="t" style="left:1302.25px;top:441.08px;font-size:13px;color:#3d3d3d;font-weight:400;transform:scaleX(1.0864);">0.00</span>
<span class="t" style="left:1359.75px;top:441.08px;font-size:13px;color:#3d3d3d;font-weight:400;transform:scaleX(1.0864);">0.00</span>
<div class="a" style="left:1409px;top:439px;width:24px;height:22px;background:#00c0ef;border:1px solid #00a3cc;"></div>
<svg style="left:1415.3px;top:443.3px;" width="12" height="12" viewBox="0 0 12 12"><g fill="none" stroke="#fff" stroke-width="1.65"><rect x="-2.4" y="-2.05" width="4.8" height="4.1" rx="1.9" transform="translate(3.6 3.7) rotate(45)"/><rect x="-2.4" y="-2.05" width="4.8" height="4.1" rx="1.9" transform="translate(8.4 8.3) rotate(45)"/><path d="M5.1 5.2 L6.9 6.8" stroke-width="1.7"/></g></svg>
<div class="a" style="left:1436px;top:439px;width:24px;height:22px;background:#00c0ef;border:1px solid #00a3cc;"></div>
<svg style="left:1441.7px;top:446px;" width="13" height="8" viewBox="0 0 13 8"><path d="M0.6 4 Q6.5 -2.9 12.4 4 Q6.5 10.9 0.6 4 Z" fill="none" stroke="#fff" stroke-width="1.45"/><circle cx="6.5" cy="3.6" r="2.6" fill="#fff" fill-opacity="0.85"/></svg>
<div class="a" style="left:1464px;top:439px;width:22px;height:22px;background:#f56954;border:1px solid #e2553f;"></div>
<svg style="left:1469.3px;top:443.9px;" width="10" height="11.5" viewBox="0 0 10 11.5"><path d="M0 2.3 H10" stroke="#fff" stroke-width="1.3"/><path d="M3.1 2 L3.7 0.6 H6.3 L6.9 2" fill="none" stroke="#fff" stroke-width="1.1"/><path d="M1.2 2.6 V9.9 Q1.2 11 2.3 11 H7.7 Q8.8 11 8.8 9.9 V2.6 Z" fill="#fff" fill-opacity="0.78" stroke="#fff" stroke-width="0.9"/><path d="M3.9 4.1 V9.1 M6.1 4.1 V9.1" stroke="#f56954" stroke-width="0.9" stroke-opacity="0.75"/></svg>
<div class="a" style="left:421px;top:479px;width:16px;height:16px;background:#fff;border:1px solid #dedede;"></div>
<span class="t" style="left:458.10px;top:480.11px;font-size:13px;color:#3d3d3d;font-weight:400;letter-spacing:0.178px;transform:scaleX(1.1000);">57589898</span>
<span class="t" style="left:583.70px;top:480.11px;font-size:13px;color:#3d3d3d;font-weight:400;transform:scaleX(0.8964);">SABILLA</span>
<span class="t" style="left:768.50px;top:480.11px;font-size:13px;color:#3d3d3d;font-weight:400;transform:scaleX(1.0226);">D3</span>
<span class="t" style="left:828.30px;top:480.11px;font-size:13px;color:#3d3d3d;font-weight:400;letter-spacing:0.033px;transform:scaleX(1.1000);">Fisioterapi - D3</span>
<span class="t" style="left:1104.55px;top:480.11px;font-size:13px;color:#3d3d3d;font-weight:400;letter-spacing:0.165px;transform:scaleX(1.1000);">99992</span>
<span class="t" style="left:1192.46px;top:480.11px;font-size:13px;color:#3d3d3d;font-weight:400;">A</span>
<span class="t" style="left:1256.48px;top:480.11px;font-size:13px;color:#3d3d3d;font-weight:400;"><i>1</i></span>
<span class="t" style="left:1302.25px;top:480.11px;font-size:13px;color:#3d3d3d;font-weight:400;transform:scaleX(1.0864);">0.00</span>
<span class="t" style="left:1359.75px;top:480.11px;font-size:13px;color:#3d3d3d;font-weight:400;transform:scaleX(1.0864);">0.00</span>
<div class="a" style="left:1409px;top:478px;width:24px;height:22px;background:#00c0ef;border:1px solid #00a3cc;"></div>
<svg style="left:1415.3px;top:482.3px;" width="12" height="12" viewBox="0 0 12 12"><g fill="none" stroke="#fff" stroke-width="1.65"><rect x="-2.4" y="-2.05" width="4.8" height="4.1" rx="1.9" transform="translate(3.6 3.7) rotate(45)"/><rect x="-2.4" y="-2.05" width="4.8" height="4.1" rx="1.9" transform="translate(8.4 8.3) rotate(45)"/><path d="M5.1 5.2 L6.9 6.8" stroke-width="1.7"/></g></svg>
<div class="a" style="left:1436px;top:478px;width:24px;height:22px;background:#00c0ef;border:1px solid #00a3cc;"></div>
<svg style="left:1441.7px;top:485px;" width="13" height="8" viewBox="0 0 13 8"><path d="M0.6 4 Q6.5 -2.9 12.4 4 Q6.5 10.9 0.6 4 Z" fill="none" stroke="#fff" stroke-width="1.45"/><circle cx="6.5" cy="3.6" r="2.6" fill="#fff" fill-opacity="0.85"/></svg>
<div class="a" style="left:1464px;top:478px;width:22px;height:22px;background:#f56954;border:1px solid #e2553f;"></div>
<svg style="left:1469.3px;top:482.9px;" width="10" height="11.5" viewBox="0 0 10 11.5"><path d="M0 2.3 H10" stroke="#fff" stroke-width="1.3"/><path d="M3.1 2 L3.7 0.6 H6.3 L6.9 2" fill="none" stroke="#fff" stroke-width="1.1"/><path d="M1.2 2.6 V9.9 Q1.2 11 2.3 11 H7.7 Q8.8 11 8.8 9.9 V2.6 Z" fill="#fff" fill-opacity="0.78" stroke="#fff" stroke-width="0.9"/><path d="M3.9 4.1 V9.1 M6.1 4.1 V9.1" stroke="#f56954" stroke-width="0.9" stroke-opacity="0.75"/></svg>
<div class="a" style="left:421px;top:518px;width:16px;height:16px;background:#fff;border:1px solid #dedede;"></div>
<span class="t" style="left:458.10px;top:519.14px;font-size:13px;color:#3d3d3d;font-weight:400;letter-spacing:0.155px;transform:scaleX(1.1000);">9090900000<i>1</i></span>
<span class="t" style="left:583.70px;top:519.14px;font-size:13px;color:#3d3d3d;font-weight:400;transform:scaleX(0.9112);">FERRANI HH</span>
<span class="t" style="left:764.25px;top:519.14px;font-size:13px;color:#3d3d3d;font-weight:400;transform:scaleX(1.0695);">Prof</span>
<span class="t" style="left:828.30px;top:519.14px;font-size:13px;color:#3d3d3d;font-weight:400;transform:scaleX(1.0997);">Profesi Apoteker</span>
<span class="t" style="left:1104.55px;top:519.14px;font-size:13px;color:#3d3d3d;font-weight:400;letter-spacing:0.165px;transform:scaleX(1.1000);">99992</span>
<span class="t" style="left:1192.46px;top:519.14px;font-size:13px;color:#3d3d3d;font-weight:400;">A</span>
<span class="t" style="left:1256.48px;top:519.14px;font-size:13px;color:#3d3d3d;font-weight:400;"><i>1</i></span>
<span class="t" style="left:1302.25px;top:519.14px;font-size:13px;color:#3d3d3d;font-weight:400;transform:scaleX(1.0864);">0.00</span>
<span class="t" style="left:1359.75px;top:519.14px;font-size:13px;color:#3d3d3d;font-weight:400;transform:scaleX(1.0864);">0.00</span>
<div class="a" style="left:1409px;top:517px;width:24px;height:22px;background:#00c0ef;border:1px solid #00a3cc;"></div>
<svg style="left:1415.3px;top:521.3px;" width="12" height="12" viewBox="0 0 12 12"><g fill="none" stroke="#fff" stroke-width="1.65"><rect x="-2.4" y="-2.05" width="4.8" height="4.1" rx="1.9" transform="translate(3.6 3.7) rotate(45)"/><rect x="-2.4" y="-2.05" width="4.8" height="4.1" rx="1.9" transform="translate(8.4 8.3) rotate(45)"/><path d="M5.1 5.2 L6.9 6.8" stroke-width="1.7"/></g></svg>
<div class="a" style="left:1436px;top:517px;width:24px;height:22px;background:#00c0ef;border:1px solid #00a3cc;"></div>
<svg style="left:1441.7px;top:524px;" width="13" height="8" viewBox="0 0 13 8"><path d="M0.6 4 Q6.5 -2.9 12.4 4 Q6.5 10.9 0.6 4 Z" fill="none" stroke="#fff" stroke-width="1.45"/><circle cx="6.5" cy="3.6" r="2.6" fill="#fff" fill-opacity="0.85"/></svg>
<div class="a" style="left:1464px;top:517px;width:22px;height:22px;background:#f56954;border:1px solid #e2553f;"></div>
<svg style="left:1469.3px;top:521.9px;" width="10" height="11.5" viewBox="0 0 10 11.5"><path d="M0 2.3 H10" stroke="#fff" stroke-width="1.3"/><path d="M3.1 2 L3.7 0.6 H6.3 L6.9 2" fill="none" stroke="#fff" stroke-width="1.1"/><path d="M1.2 2.6 V9.9 Q1.2 11 2.3 11 H7.7 Q8.8 11 8.8 9.9 V2.6 Z" fill="#fff" fill-opacity="0.78" stroke="#fff" stroke-width="0.9"/><path d="M3.9 4.1 V9.1 M6.1 4.1 V9.1" stroke="#f56954" stroke-width="0.9" stroke-opacity="0.75"/></svg>
<div class="a" style="left:421px;top:557px;width:16px;height:16px;background:#fff;border:1px solid #dedede;"></div>
<span class="t" style="left:459.27px;top:558.17px;font-size:13px;color:#3d3d3d;font-weight:400;transform:scaleX(1.0593);"><i>1</i><i>1</i>800000<i>1</i></span>
<span class="t" style="left:583.70px;top:558.17px;font-size:13px;color:#3d3d3d;font-weight:400;transform:scaleX(0.9774);">NADEO ARTAMA</span>
<span class="t" style="left:771.00px;top:558.17px;font-size:13px;color:#3d3d3d;font-weight:400;transform:scaleX(0.8747);">S<i>1</i></span>
<span class="t" style="left:828.30px;top:558.17px;font-size:13px;color:#3d3d3d;font-weight:400;letter-spacing:0.013px;transform:scaleX(1.1000);">Desain Komunikasi Visual</span>
<span class="t" style="left:1106.30px;top:558.17px;font-size:13px;color:#3d3d3d;font-weight:400;transform:scaleX(1.0892);">9999<i>1</i></span>
<span class="t" style="left:1192.46px;top:558.17px;font-size:13px;color:#3d3d3d;font-weight:400;">A</span>
<span class="t" style="left:1255.38px;top:558.17px;font-size:13px;color:#3d3d3d;font-weight:400;">2</span>
<span class="t" style="left:1302.25px;top:558.17px;font-size:13px;color:#3d3d3d;font-weight:400;transform:scaleX(1.0864);">0.00</span>
<span class="t" style="left:1359.75px;top:558.17px;font-size:13px;color:#3d3d3d;font-weight:400;transform:scaleX(1.0864);">0.00</span>
<div class="a" style="left:1409px;top:556px;width:24px;height:22px;background:#00c0ef;border:1px solid #00a3cc;"></div>
<svg style="left:1415.3px;top:560.3px;" width="12" height="12" viewBox="0 0 12 12"><g fill="none" stroke="#fff" stroke-width="1.65"><rect x="-2.4" y="-2.05" width="4.8" height="4.1" rx="1.9" transform="translate(3.6 3.7) rotate(45)"/><rect x="-2.4" y="-2.05" width="4.8" height="4.1" rx="1.9" transform="translate(8.4 8.3) rotate(45)"/><path d="M5.1 5.2 L6.9 6.8" stroke-width="1.7"/></g></svg>
<div class="a" style="left:1436px;top:556px;width:24px;height:22px;background:#00c0ef;border:1px solid #00a3cc;"></div>
<svg style="left:1441.7px;top:563px;" width="13" height="8" viewBox="0 0 13 8"><path d="M0.6 4 Q6.5 -2.9 12.4 4 Q6.5 10.9 0.6 4 Z" fill="none" stroke="#fff" stroke-width="1.45"/><circle cx="6.5" cy="3.6" r="2.6" fill="#fff" fill-opacity="0.85"/></svg>
<div class="a" style="left:1464px;top:556px;width:22px;height:22px;background:#f56954;border:1px solid #e2553f;"></div>
<svg style="left:1469.3px;top:560.9px;" width="10" height="11.5" viewBox="0 0 10 11.5"><path d="M0 2.3 H10" stroke="#fff" stroke-width="1.3"/><path d="M3.1 2 L3.7 0.6 H6.3 L6.9 2" fill="none" stroke="#fff" stroke-width="1.1"/><path d="M1.2 2.6 V9.9 Q1.2 11 2.3 11 H7.7 Q8.8 11 8.8 9.9 V2.6 Z" fill="#fff" fill-opacity="0.78" stroke="#fff" stroke-width="0.9"/><path d="M3.9 4.1 V9.1 M6.1 4.1 V9.1" stroke="#f56954" stroke-width="0.9" stroke-opacity="0.75"/></svg>
<div class="a" style="left:1494px;top:153px;width:19px;height:461px;background:#fafafa;"></div>
<svg style="left:1496.8px;top:160.9px;" width="13.4" height="7" viewBox="0 0 13.4 7"><path d="M0 7 L6.7 0 L13.4 7 Z" fill="#8a8a8a"/></svg>
<svg style="left:1497px;top:580.1px;" width="13.3" height="7" viewBox="0 0 13.3 7"><path d="M0 0 L6.65 7 L13.3 0 Z" fill="#8a8a8a"/></svg>
<div class="a" style="left:408.5px;top:595px;width:1104.5px;height:19px;background:#fafafa;"></div>
<svg style="left:415.1px;top:598px;" width="6.9" height="13" viewBox="0 0 6.9 13"><path d="M6.9 0 L0 6.5 L6.9 13 Z" fill="#8a8a8a"/></svg>
<div class="a" style="left:431.1px;top:598.9px;width:1038.8px;height:11.1px;background:#8a8a8a;border-radius:5.6px;"></div>
<svg style="left:1480px;top:598px;" width="6.9" height="13" viewBox="0 0 6.9 13"><path d="M0 0 L6.9 6.5 L0 13 Z" fill="#8a8a8a"/></svg>
<div class="a" style="left:408px;top:622px;width:348px;height:29.6px;background:#edf4fc;border-left:5px solid #c3dbee;"></div>
<span class="t" style="left:427.30px;top:630.62px;font-size:12.5px;color:#444;font-weight:400;transform:scaleX(1.0452);">Hal <i>1</i>/<i>1</i>.437 (<i>1</i>4.368 data, 0.0868 detik)</span>
<div class="a" style="left:786.3px;top:622px;width:158.5px;height:33.5px;background:#fff;border:1px solid #c9c9c9;border-radius:5px;"></div>
<span class="t" style="left:803.62px;top:632.62px;font-size:12.5px;color:#555;font-weight:400;transform:scaleX(1.0576);"><i>1</i>0 baris</span>
<svg style="left:929.6px;top:635.7px;" width="9.8" height="6.1" viewBox="0 0 10.5 6.5"><path d="M1 1 L5.25 5.2 L9.5 1" fill="none" stroke="#3a3a3a" stroke-width="2" stroke-linecap="round" stroke-linejoin="round"/></svg>
<div class="a" style="left:1260.4px;top:624.3px;width:251.19999999999982px;height:30px;background:#fff;border:1px solid #ddd;border-radius:4px;box-shadow:0 1px 1px rgba(0,0,0,.12);"></div>
<div class="a" style="left:1260.4px;top:624.3px;width:62.69999999999982px;height:30px;background:#dcdcdc;border-radius:4px 0 0 4px;"></div>
<div class="a" style="left:1323.1px;top:624.3px;width:29.90000000000009px;height:30px;background:#0050a0;"></div>
<div class="a" style="left:1384.1px;top:624.8px;width:1px;height:29px;background:#ddd;"></div>
<div class="a" style="left:1415.9px;top:624.8px;width:1px;height:29px;background:#ddd;"></div>
<div class="a" style="left:1447.9px;top:624.8px;width:1px;height:29px;background:#ddd;"></div>
<div class="a" style="left:1478.0px;top:624.8px;width:1px;height:29px;background:#ddd;"></div>
<svg style="left:1273.1px;top:635.7px;" width="8.4" height="7.4" viewBox="0 0 9 8"><path  d="M4.2 0.6 L0.8 4 L4.2 7.4 M8.2 0.6 L4.8 4 L8.2 7.4" fill="none" stroke="#666" stroke-width="1.25"/></svg>
<svg style="left:1306.2px;top:635.7px;" width="4.9" height="7.4" viewBox="0 0 5 8"><path  d="M4.2 0.6 L0.8 4 L4.2 7.4" fill="none" stroke="#666" stroke-width="1.25"/></svg>
<span class="t" style="left:1335.48px;top:632.80px;font-size:13px;color:#fff;font-weight:400;"><i>1</i></span>
<span class="t" style="left:1364.98px;top:632.80px;font-size:13px;color:#555;font-weight:400;">2</span>
<span class="t" style="left:1396.78px;top:632.80px;font-size:13px;color:#555;font-weight:400;">3</span>
<span class="t" style="left:1428.98px;top:632.80px;font-size:13px;color:#555;font-weight:400;">4</span>
<svg style="left:1461.3px;top:635.7px;" width="4.9" height="7.4" viewBox="0 0 5 8"><path transform="translate(5,0) scale(-1,1)" d="M4.2 0.6 L0.8 4 L4.2 7.4" fill="none" stroke="#1a5ea8" stroke-width="1.3"/></svg>
<svg style="left:1490.6px;top:635.7px;" width="8.4" height="7.4" viewBox="0 0 9 8"><path transform="translate(9,0) scale(-1,1)" d="M4.2 0.6 L0.8 4 L4.2 7.4 M8.2 0.6 L4.8 4 L8.2 7.4" fill="none" stroke="#1a5ea8" stroke-width="1.3"/></svg>
<div class="a" style="left:408px;top:666px;width:1105px;height:30px;background:#fcf8e9;border-left:5px solid #f1e6b6;"></div>
<div class="a" style="left:1191.8px;top:147.2px;width:227.6px;height:256.4px;background:#fff;border:1px solid #d2d2d2;border-radius:4px;box-shadow:0 6px 12px rgba(0,0,0,.175);"></div>
<span class="t" style="left:1212.40px;top:158.00px;font-size:13px;color:#333;font-weight:400;letter-spacing:0.071px;transform:scaleX(1.1000);">Pindah Program Studi</span>
<span class="t" style="left:1212.40px;top:182.50px;font-size:13px;color:#333;font-weight:400;letter-spacing:0.033px;transform:scaleX(1.1000);">Set Kelas/Kelompok</span>
<span class="t" style="left:1212.40px;top:207.00px;font-size:13px;color:#333;font-weight:400;transform:scaleX(1.0875);">Set Kurikulum</span>
<span class="t" style="left:1212.40px;top:231.50px;font-size:13px;color:#333;font-weight:400;transform:scaleX(1.0863);">Set Konsentrasi</span>
<span class="t" style="left:1212.40px;top:256.00px;font-size:13px;color:#333;font-weight:400;letter-spacing:0.094px;transform:scaleX(1.1000);">Set Jalur Pendaftaran</span>
<span class="t" style="left:1212.40px;top:280.50px;font-size:13px;color:#333;font-weight:400;letter-spacing:0.058px;transform:scaleX(1.1000);">Set Jenis Pendaftaran</span>
<span class="t" style="left:1212.40px;top:305.00px;font-size:13px;color:#333;font-weight:400;letter-spacing:0.199px;transform:scaleX(1.1000);">Set Gelombang Pendaftaran</span>
<span class="t" style="left:1212.40px;top:329.50px;font-size:13px;color:#333;font-weight:400;transform:scaleX(1.0818);">Set Sistem Kuliah</span>
<span class="t" style="left:1212.40px;top:354.00px;font-size:13px;color:#333;font-weight:400;letter-spacing:0.109px;transform:scaleX(1.1000);">Set Tanggal Masuk</span>
<span class="t" style="left:1212.40px;top:378.50px;font-size:13px;color:#333;font-weight:400;letter-spacing:0.045px;transform:scaleX(1.1000);">Salin Mahasiswa</span>
<div class="a" style="left:1202.1px;top:177.8px;width:207px;height:200.6px;border:3px solid #dc0f0f;"></div>
<svg style="left:0;top:0" width="1537" height="678" viewBox="0 0 1537 678"><path d="M1121.4 389.9 L1178.5 335" stroke="#fa0a0a" stroke-width="4.6" stroke-linecap="round" fill="none"/><path d="M1200.2 314.4 L1171.2 331.4 L1180.3 333.4 L1182.6 342.8 Z" fill="#fa0a0a"/></svg>
</body></html>
